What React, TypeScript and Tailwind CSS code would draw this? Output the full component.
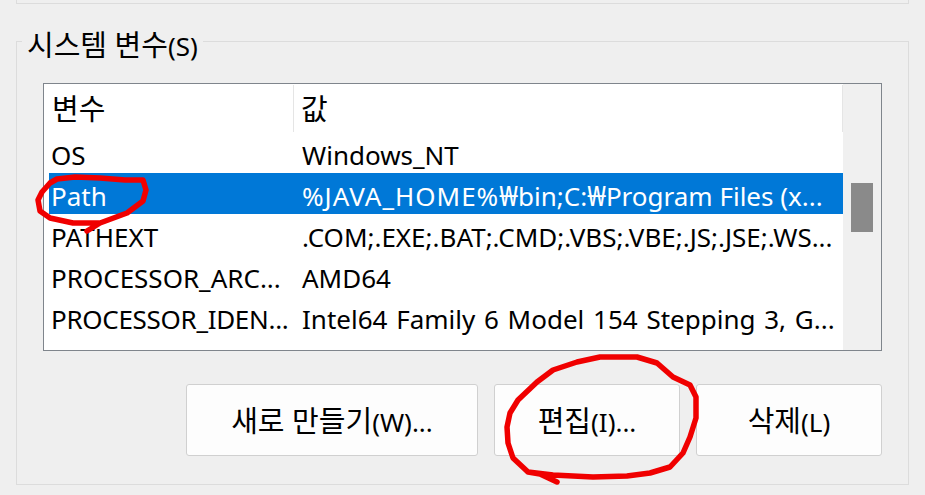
import React from 'react';

const K: React.FC<{ children: React.ReactNode }> = ({ children }) => (
  <span className="text-[29px] leading-none">{children}</span>
);

const Won = () => <span className="text-[28px] leading-none">₩</span>;

const rows: { name: string; value: React.ReactNode; selected?: boolean; nameClass?: string; valueClass?: string }[] = [
  { name: 'OS', value: 'Windows_NT' },
  {
    name: 'Path',
    value: (
      <>
        <span className="tracking-[1px]">%JAVA_HOME%</span>
        <Won />bin;C:<Won />Program Files (x...
      </>
    ),
    selected: true,
  },
  { name: 'PATHEXT', value: '.COM;.EXE;.BAT;.CMD;.VBS;.VBE;.JS;.JSE;.WS...' },
  { name: 'PROCESSOR_ARC...', value: 'AMD64' },
  {
    name: 'PROCESSOR_IDEN...',
    value: 'Intel64 Family 6 Model 154 Stepping 3, G...',
    nameClass: 'tracking-[-0.3px]',
    valueClass: '[word-spacing:2px]',
  },
];

const Btn: React.FC<{ children: React.ReactNode; className: string }> = ({ children, className }) => (
  <button className={`h-[72px] rounded-[3px] border border-[#d0d0d0] bg-[#fdfdfd] pt-[5px] text-black ${className}`}>
    {children}
  </button>
);

export default function App() {
  return (
    <div className="relative flex h-[495px] w-[925px] flex-col overflow-hidden bg-[#efefef] px-[16px] font-['Noto_Sans','Noto_Sans_CJK_KR',sans-serif] text-[26px] text-black">
      <div className="h-[4px] border-x border-b border-[#dcdcdc]" />

      <section className="mt-[37px] h-[444px] border border-[#dcdcdc]">
        <div className="ml-[5px] -mt-[20px] h-[42px] w-fit bg-[#efefef] px-[5px] leading-[48px]">
          <K>시스템 변수</K>(S)
        </div>

        <div className="mx-[26px] mt-[19px] flex h-[268px] border border-[#7f858c] bg-white">
          <div className="flex w-[799px] flex-col pl-[5px]">
            <div className="flex h-[48px] shrink-0 pt-[1px]">
              <div className="w-[245px] border-r border-[#e5e5e5] pl-[3px] leading-[50px]"><K>변수</K></div>
              <div className="flex-1 border-r border-[#e5e5e5] pl-[7px] leading-[50px]"><K>값</K></div>
            </div>
            {rows.map((row) => (
              <div
                key={row.name}
                className={`flex h-[41px] shrink-0 items-center whitespace-nowrap pt-[5px] ${row.selected ? 'bg-[#0078d7] text-white' : ''}`}
              >
                <div className={`w-[250px] pl-[2px] ${row.nameClass ?? ''}`}>{row.name}</div>
                <div className={`pl-[3px] ${row.valueClass ?? ''}`}>{row.value}</div>
              </div>
            ))}
          </div>
          <div className="flex-1 bg-[#f0f0f0] px-[8px] pt-[99px]">
            <div className="h-[49px] bg-[#8a8a8a]" />
          </div>
        </div>

        <div className="mr-[26px] mt-[33px] flex justify-end gap-[16px]">
          <Btn className="w-[292px]"><K>새로 만들기</K>(W)...</Btn>
          <Btn className="w-[186px]"><K>편집</K>(I)...</Btn>
          <Btn className="w-[186px]"><K>삭제</K>(L)</Btn>
        </div>
      </section>

      {/* hand drawn marks on top of the screenshot */}
      <svg className="absolute left-0 top-0" width="925" height="495" viewBox="0 0 925 495" fill="none" stroke="#f00000" strokeWidth="5.5" strokeLinecap="round" strokeLinejoin="round">
        <path d="M87 231 L100 223 L73 223 L50 218 L40 211 L38 200 L42 192 L50 183 L57 179 L75 177 L100 178 L125 180 L143 180 L146 190 L143 201 L127 213 L100 223" />
        <path d="M557 482 L540 474 L528 472 L513 458 L508 443 L507 427 L510 413 L518 400 L537 382 L553 370 L577 362 L600 357 L637 357 L657 363 L673 377 L690 385 L696 397 L696 418 L690 437 L683 453 L670 467 L650 473 L627 476 L593 477 L553 475 L528 472" />
      </svg>
    </div>
  );
}
